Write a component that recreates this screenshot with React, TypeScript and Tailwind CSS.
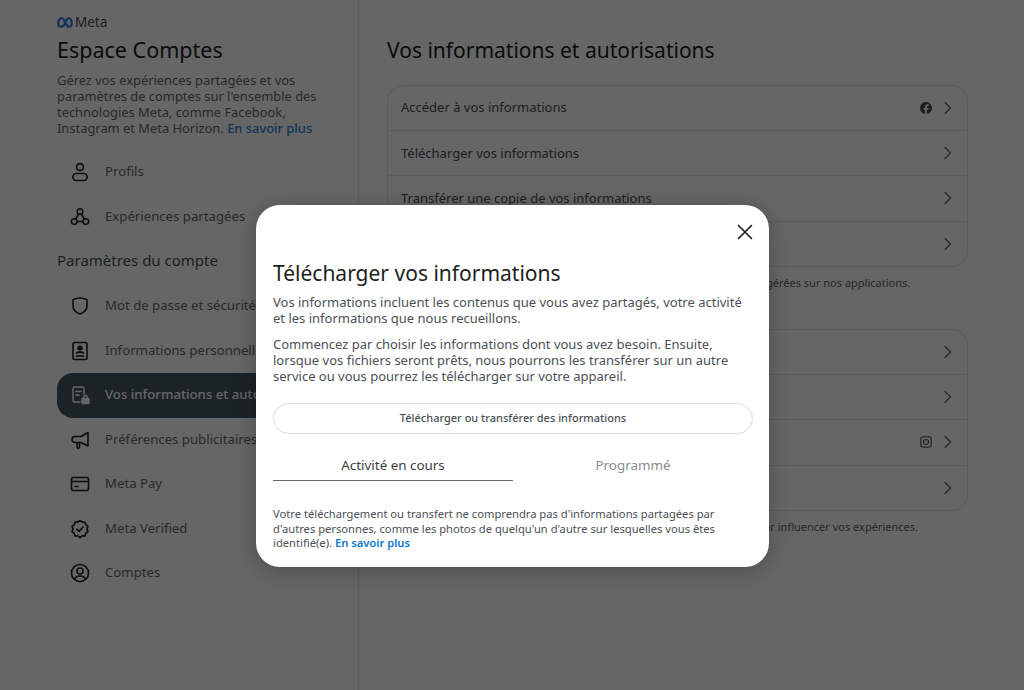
const font = { fontFamily: '"Noto Sans", sans-serif' };

const Chevron = () => (
  <svg width="8" height="14" viewBox="0 0 8 14" fill="none" stroke="#65676b" strokeWidth="1.300" strokeLinecap="round" strokeLinejoin="round">
    <path d="M1 1.500 6.500 7 1 12.500" />
  </svg>
);

const FacebookIcon = () => (
  <svg width="12" height="12" viewBox="0 0 24 24" fill="#4b4f56">
    <path d="M24 12a12 12 0 1 0-13.900 11.900v-8.400H7.100V12h3V9.400c0-3 1.800-4.700 4.500-4.700 1.300 0 2.700.2 2.700.2v3h-1.500c-1.500 0-2 .9-2 1.900V12h3.300l-.5 3.500h-2.800v8.400A12 12 0 0 0 24 12z" />
  </svg>
);

const InstagramIcon = () => (
  <svg width="12" height="12" viewBox="0 0 24 24" fill="none" stroke="#4b4f56" strokeWidth="2.200">
    <rect x="1.500" y="1.500" width="21" height="21" rx="5.500" />
    <circle cx="12" cy="12" r="5" />
  </svg>
);

const iconProps = {
  width: 20,
  height: 20,
  viewBox: "0 0 20 20",
  fill: "none",
  stroke: "#1c1e21",
  strokeWidth: 1.600,
  strokeLinecap: "round" as const,
  strokeLinejoin: "round" as const,
};

const ProfileIcon = () => (
  <svg {...iconProps}>
    <circle cx="10" cy="5" r="3.400" />
    <rect x="2.800" y="11.500" width="14.400" height="7" rx="3.500" />
  </svg>
);

const SharedIcon = () => (
  <svg {...iconProps}>
    <circle cx="10" cy="4.500" r="2.800" />
    <circle cx="4.200" cy="14.500" r="2.800" />
    <circle cx="15.800" cy="14.500" r="2.800" />
    <path d="M8.600 7 5.600 12M11.400 7l3 5M7 14.500h6" />
  </svg>
);

const ShieldIcon = () => (
  <svg {...iconProps}>
    <path d="M10 2c2.600 0 5 .5 7 1.600v6c0 4.200-3 7.200-7 8.400-4-1.200-7-4.200-7-8.400v-6C5 2.500 7.400 2 10 2z" />
  </svg>
);

const IdIcon = () => (
  <svg {...iconProps}>
    <rect x="3" y="1.500" width="14" height="17" rx="1.500" />
    <circle cx="10" cy="7" r="1.800" fill="#1c1e21" />
    <path d="M6.500 12.200c.8-1.400 6.200-1.400 7 0M6.500 15h7" />
  </svg>
);

const InfoLockIcon = () => (
  <svg {...iconProps} stroke="#ffffff" strokeWidth="1.400">
    <path d="M10 17H4.500A1.500 1.500 0 0 1 3 15.500v-12A1.500 1.500 0 0 1 4.500 2h8A1.500 1.500 0 0 1 14 3.500V9" />
    <path d="M6 6.500h5M6 10h3.500" />
    <rect x="12" y="13.500" width="7" height="5" rx=".6" fill="#ffffff" />
    <path d="M13.800 13.500v-1.300a1.700 1.700 0 0 1 3.400 0v1.300" />
  </svg>
);

const MegaphoneIcon = () => (
  <svg {...iconProps}>
    <path d="M18 2.500v13.500l-7-3.500H5A2.900 2.900 0 0 1 5 6.500h6z" />
    <path d="M7 12.500v4.500a1.200 1.200 0 0 0 2.500 0v-4.500" />
  </svg>
);

const CardIcon = () => (
  <svg {...iconProps}>
    <rect x="1.500" y="3.500" width="17" height="13" rx="2" />
    <path d="M1.500 7.500h17M5 12.500h3" />
  </svg>
);

const VerifiedIcon = () => (
  <svg {...iconProps}>
    <path d="M10 1.500l2.200 1.600 2.700-.1.800 2.600 2.200 1.600-.9 2.800.9 2.800-2.200 1.600-.8 2.600-2.700-.1L10 18.500l-2.200-1.600-2.700.1-.8-2.600-2.200-1.600.9-2.800-.9-2.800 2.200-1.600.8-2.600 2.700.1z" />
    <path d="M6.800 10.200l2.200 2.200 4.200-4.400" />
  </svg>
);

const AccountIcon = () => (
  <svg {...iconProps}>
    <circle cx="10" cy="10" r="8.500" />
    <circle cx="10" cy="8" r="3" />
    <path d="M4.800 16.200c.8-4.200 9.600-4.200 10.400 0" />
  </svg>
);

const MetaLogo = () => (
  <svg width="16" height="11" viewBox="0 0 32 22" fill="none" stroke="#2a86dd" strokeWidth="4.400">
    <path d="M2.500 14C2.500 7 5.500 2.500 9.500 2.500c3 0 5 3.500 7 8.500s4 8.500 8 8.500c3 0 5-2 5-6 0-6-2.500-11-6-11-3 0-5 3.500-7 8.500s-4 8.500-8 8.500c-3.500 0-6-2-6-5.500z" />
  </svg>
);

function NavItem({ icon, label, active }: { icon: React.ReactNode; label: string; active?: boolean }) {
  return (
    <div className={`flex h-[44.500px] items-center gap-[15px] rounded-2xl pl-[13px] ${active ? "bg-[#465863]" : ""}`}>
      <span className="flex h-5 w-5 shrink-0 items-center justify-center">{icon}</span>
      <span className={`whitespace-nowrap text-[13.200px] ${active ? "font-medium text-white" : "text-[#65676b]"}`}>{label}</span>
    </div>
  );
}

function Row({ label, icon, last }: { label: string; icon?: React.ReactNode; last?: boolean }) {
  return (
    <div className={`flex h-[45.200px] items-center justify-between pl-[13px] pr-[15px] ${last ? "" : "border-b border-[#e4e6eb]"}`}>
      <span className="text-[13px] text-[#4b4f56]">{label}</span>
      <span className="flex items-center gap-[12px]">
        {icon}
        <Chevron />
      </span>
    </div>
  );
}

export default function App() {
  return (
    <div className="relative h-[690px] w-full overflow-hidden bg-white" style={font}>
      <div className="flex h-full">
        <aside className="w-[359px] shrink-0 border-r border-[#e4e6eb] pl-[57px] pr-[23px] pt-[14px]">
          <div className="flex items-center gap-[2px] text-[13.500px] leading-4 text-[#4b4f56]">
            <MetaLogo />
            <span>Meta</span>
          </div>
          <h1 className="mt-[6px] text-[21.500px] leading-7 text-[#1c1e21]">Espace Comptes</h1>
          <p className="mt-[8px] w-[275px] text-[12.900px] leading-4 text-[#65676b]">
            Gérez vos expériences partagées et vos paramètres de comptes sur l'ensemble des technologies Meta, comme Facebook, Instagram et Meta Horizon. <span className="font-medium text-[#2a86dd]">En savoir plus</span>
          </p>
          <nav className="mt-[14px]">
            <NavItem icon={<ProfileIcon />} label="Profils" />
            <NavItem icon={<SharedIcon />} label="Expériences partagées" />
          </nav>
          <h2 className="mb-[14px] mt-[11px] text-[15px] leading-5 text-[#4b4f56]">Paramètres du compte</h2>
          <nav>
            <NavItem icon={<ShieldIcon />} label="Mot de passe et sécurité" />
            <NavItem icon={<IdIcon />} label="Informations personnelles" />
            <NavItem icon={<InfoLockIcon />} label="Vos informations et autorisations" active />
            <NavItem icon={<MegaphoneIcon />} label="Préférences publicitaires" />
            <NavItem icon={<CardIcon />} label="Meta Pay" />
            <NavItem icon={<VerifiedIcon />} label="Meta Verified" />
            <NavItem icon={<AccountIcon />} label="Comptes" />
          </nav>
        </aside>
        <main className="w-[609px] pl-[28px] pt-[36px]">
          <h2 className="text-[21px] leading-7 text-[#1c1e21]">Vos informations et autorisations</h2>
          <div className="mt-[21px] h-[182px] w-[581px] overflow-hidden rounded-2xl border border-[#e4e6eb]">
            <Row label="Accéder à vos informations" icon={<FacebookIcon />} />
            <Row label="Télécharger vos informations" />
            <Row label="Transférer une copie de vos informations" />
            <Row label="Rechercher vos informations" last />
          </div>
          <p className="mt-[8px] whitespace-nowrap text-[11px] leading-4 text-[#65676b]">
            Découvrez comment accéder aux informations et la façon dont elles sont gérées sur nos applications.
          </p>
          <div className="mt-[38px] h-[182px] w-[581px] overflow-hidden rounded-2xl border border-[#e4e6eb]">
            <Row label="Activité hors des technologies Meta" />
            <Row label="Gérer vos informations" />
            <Row label="Historique de recherche" icon={<InstagramIcon />} />
            <Row label="Contacts" last />
          </div>
          <p className="mt-[8px] whitespace-nowrap text-[11px] leading-4 text-[#65676b]">
            Choisissez les informations et les réglages que nous pourrions utiliser pour influencer vos expériences.
          </p>
        </main>
      </div>

      {/* overlay + dialog */}
      <div className="absolute inset-0 flex justify-center bg-black/60 pt-[205px]">
        <div className="ml-px h-[362px] w-[513px] rounded-[24px] bg-white px-[17px] shadow-[0_4px_24px_rgba(0,0,0,0.25)]">
          <div className="flex h-[54px] justify-end pt-[19px]">
            <svg width="16" height="16" viewBox="0 0 16 16" fill="none" stroke="#1c1e21" strokeWidth="1.700" strokeLinecap="round" className="-mr-[1px]">
              <path d="M1.500 1.500l13 13M14.500 1.500l-13 13" />
            </svg>
          </div>
          <h3 className="text-[21px] leading-7 text-[#1c1e21]">Télécharger vos informations</h3>
          <p className="mt-[7px] text-[13px] leading-4 text-[#4b4f56]">
            Vos informations incluent les contenus que vous avez partagés, votre activité et les informations que nous recueillons.
          </p>
          <p className="mt-[10px] text-[13px] leading-4 text-[#4b4f56]">
            Commencez par choisir les informations dont vous avez besoin. Ensuite, lorsque vos fichiers seront prêts, nous pourrons les transférer sur un autre service ou vous pourrez les télécharger sur votre appareil.
          </p>
          <div className="mt-[19px] flex h-[31px] w-[480px] items-center justify-center rounded-full border border-[#dadde1] text-[11px] font-medium text-[#4b4f56]">
            Télécharger ou transférer des informations
          </div>
          <div className="mt-[16px] flex w-[480px]">
            <div className="h-[31px] w-[240px] border-b border-[#65676b] text-center text-[13.400px] leading-[30px] text-[#3a3b3f]">Activité en cours</div>
            <div className="h-[31px] w-[240px] text-center text-[13.400px] leading-[30px] text-[#8a8d91]">Programmé</div>
          </div>
          <p className="mt-[26px] w-[480px] text-[11.200px] leading-[14.500px] text-[#4b4f56]">
            Votre téléchargement ou transfert ne comprendra pas d'informations partagées par d'autres personnes, comme les photos de quelqu'un d'autre sur lesquelles vous êtes identifié(e). <span className="font-semibold text-[#0a78d1]">En savoir plus</span>
          </p>
        </div>
      </div>
    </div>
  );
}
